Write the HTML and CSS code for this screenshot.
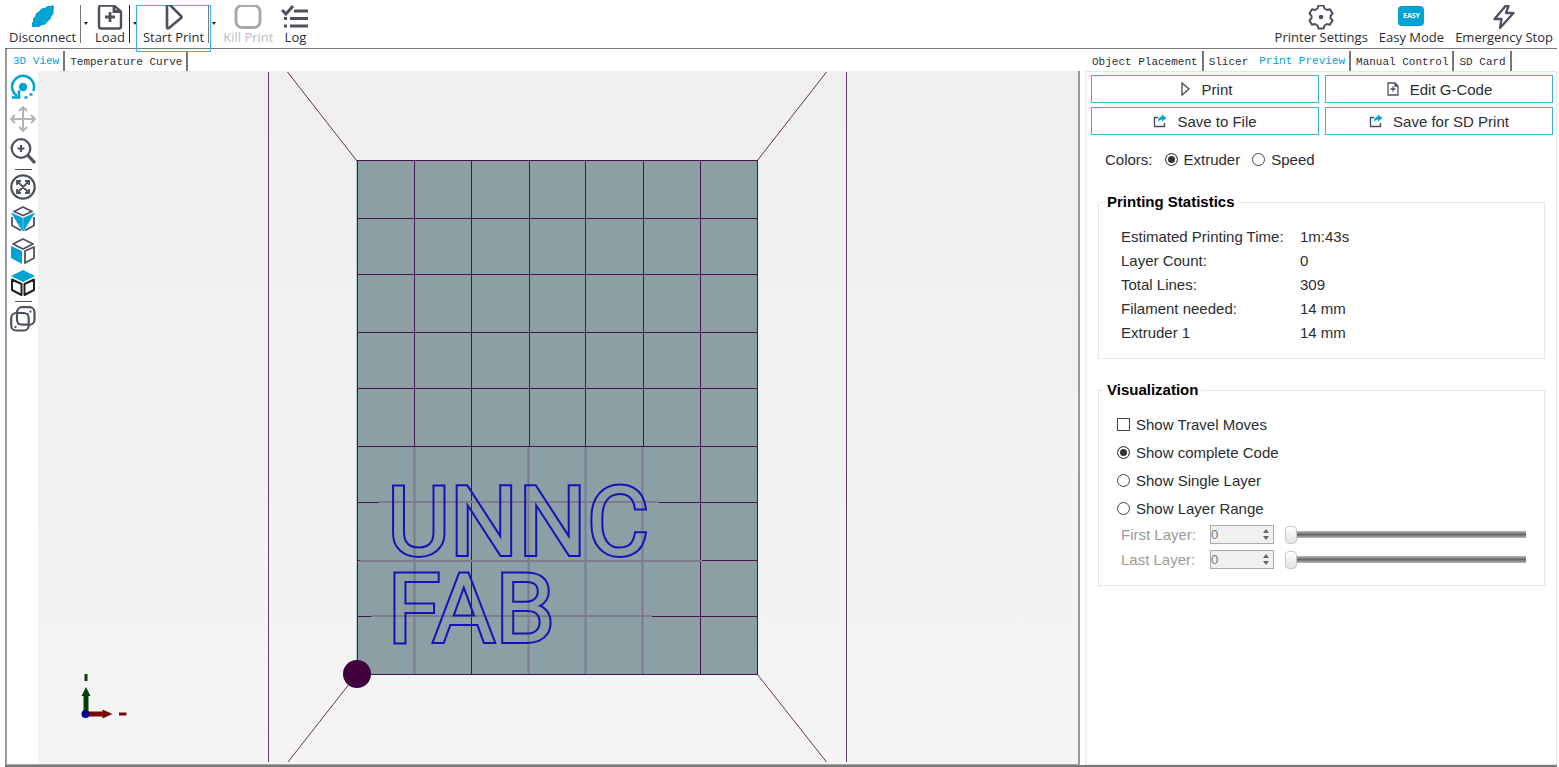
FILE: index.html
```html
<!DOCTYPE html>
<html lang="en">
<head>
    <meta charset="UTF-8">
    <meta name="viewport" content="width=device-width, initial-scale=1.0">
    <title>Print Preview</title>
    <link rel="stylesheet" href="styles.css">
</head>
<body>
    <!-- Main Toolbar -->
    <header class="toolbar">
        <div class="tool-group">
            <button class="tool-btn">
                <svg width="28" height="26" viewBox="0 0 28 26"><path d="M3.500 21.500l0-4 1-1 0-3 2-2 1-3 3-2 2-2.500 4-1 2-1.500 3.500 0 2-1 .5 3-.5 1.500 0 4-2 2-1 3-3 2.500-2 2.500-4 1-2 1.500-3.500 0-1.500.5z" fill="#00a3d1" stroke="#00a3d1" stroke-linejoin="round"/></svg>
                Disconnect
            </button>
            <button class="drop-btn" aria-label="Connection options"></button>
            <button class="tool-btn">
                <svg width="28" height="26" viewBox="0 0 28 26" fill="none" stroke="#4d505f" stroke-width="2.4"><path d="M18 0.500H5a2 2 0 0 0-2 2v19a2 2 0 0 0 2 2h18a2 2 0 0 0 2-2V6.500z"/><path d="M18 0v6.500h7M14 7v10M9 12h10" stroke-width="2.800"/></svg>
                Load
            </button>
            <button class="drop-btn dark" aria-label="Recent files"></button>
            <button class="tool-btn active">
                <svg width="28" height="26" viewBox="0 0 28 26" fill="none" stroke="#4d505f" stroke-width="2.6" stroke-linejoin="round"><path d="M7 1v21q0 2 2 1l12-10q1-1 0-2L10 0Q7-1 7 1z"/></svg>
                Start Print
            </button>
            <button class="drop-btn" aria-label="Print options"></button>
            <button class="tool-btn" disabled>
                <svg width="28" height="26" viewBox="0 0 28 26" fill="none" stroke="#a9a9a9" stroke-width="3"><rect x="2" y="0.500" width="24" height="22" rx="6"/></svg>
                Kill Print
            </button>
            <button class="tool-btn">
                <svg width="28" height="26" viewBox="0 0 28 26" fill="none" stroke="#4d505f" stroke-width="3"><path d="M1 5l4 4 7-8M13 6h14M9 13.500h18M9 21h18M3 13.500h3M3 21h3"/></svg>
                Log
            </button>
        </div>
        <div class="tool-group right">
            <button class="tool-btn">
                <svg width="28" height="26" viewBox="0 0 28 26" fill="none" stroke="#4d505f" stroke-width="2" stroke-linejoin="round"><path d="M11.500 0.500h5l1 3 2.500 1.500 3-.7 2.500 4.200-2 2.300v2.400l2 2.300-2.500 4.200-3-.7-2.500 1.500-1 3h-5l-1-3L8 19l-3 .7-2.500-4.200 2-2.300v-2.400l-2-2.300L5 4.300 8 5l2.500-1.500z"/><circle cx="14" cy="12" r="1.300" fill="#4d505f"/></svg>
                Printer Settings
            </button>
            <button class="tool-btn">
                <span class="easy-badge">EASY</span>
                Easy Mode
            </button>
            <button class="tool-btn">
                <svg width="28" height="26" viewBox="0 0 28 26" fill="none" stroke="#4d505f" stroke-width="2.300" stroke-linejoin="round"><path d="M15.500 1L4.500 14h7l-1.500 9 13.500-15h-7.500l2.500-7z"/></svg>
                Emergency Stop
            </button>
        </div>
    </header>

    <main class="workspace">
        <!-- 3D View -->
        <section class="view-panel">
            <div class="tabs" role="tablist">
                <button class="tab selected" role="tab" aria-selected="true">3D View</button>
                <button class="tab" role="tab">Temperature Curve</button>
            </div>
            <div class="view-body">
                <nav class="view-tools">
                    <div class="view-group">
                        <button aria-label="Rotate"><svg viewBox="0 0 26 26" fill="none" stroke="#00a3d1" stroke-width="2.600"><path d="M7 22A11 11 0 1 1 24 14q0 2-1 3"/><path d="M2 23.500h7v-7"/><circle cx="13" cy="13" r="4.200" fill="#00a3d1" stroke="none"/><path d="M19.500 20.500h3M14.500 23.500h3"/></svg></button>
                        <button aria-label="Move"><svg viewBox="0 0 26 26" fill="none" stroke="#b4b4b4" stroke-width="2"><path d="M13 1v24M1 13h24M9 5l4-4 4 4M9 21l4 4 4-4M5 9l-4 4 4 4M21 9l4 4-4 4"/></svg></button>
                        <button aria-label="Zoom"><svg viewBox="0 0 26 26" fill="none" stroke="#4d505f" stroke-width="2.200"><circle cx="11" cy="10.500" r="9.300"/><path d="M11 7v7M7.500 10.500h7"/><path d="M17.500 17l7.500 8" stroke-width="3.200"/></svg></button>
                    </div>
                    <hr>
                    <div class="view-group">
                        <button aria-label="Fit view"><svg viewBox="0 0 26 26" fill="none" stroke="#4d505f" stroke-width="1.800"><circle cx="13" cy="13" r="11.700" stroke-width="2.200"/><path d="M7 7l12 12M19 7L7 19M7 11V7h4M15 7h4v4M19 15v4h-4M11 19H7v-4"/></svg></button>
                        <button aria-label="Isometric view"><svg viewBox="0 0 26 26" fill="none" stroke="#4d505f" stroke-width="1.800" stroke-linejoin="round"><path d="M4 5.500l9-4.500 9 4.500-9 4zM2 11v8.500l9 5M24 11v8.500l-9 5"/><path d="M1.500 7l11 5v13zM24.500 7l-11 5v13z" fill="#00a3d1" stroke="#00a3d1" stroke-width=".6"/></svg></button>
                        <button aria-label="Front view"><svg viewBox="0 0 26 26" fill="none" stroke="#4d505f" stroke-width="1.800" stroke-linejoin="round"><path d="M3 6l10-5 10 5-10 5zM15 13l9-4v11l-9 5z"/><path d="M1 8l11 5v13L1 20z" fill="#00a3d1" stroke="none"/></svg></button>
                        <button aria-label="Top view"><svg viewBox="0 0 26 26" fill="none" stroke="#222" stroke-width="2" stroke-linejoin="round"><path d="M2 9.500l9.500 4.500v11L2 20zM24 9.500L14.500 14v11l9.500-5z"/><path d="M1 6l12-6 12 6-12 6z" fill="#00a3d1" stroke="none"/></svg></button>
                    </div>
                    <hr>
                    <div class="view-group">
                        <button aria-label="Parallel projection"><svg viewBox="0 0 26 26" fill="none" stroke="#4d505f" stroke-width="2.200"><rect x="7" y="1.200" width="17.500" height="17.500" rx="5"/><rect x="1.200" y="7" width="17.500" height="17.500" rx="5"/><path d="M19.500 5.500h2M16.500 8h2M4.500 21h2M7.500 18h2" stroke-width="2"/></svg></button>
                    </div>
                </nav>
                <svg class="scene" viewBox="38 71 1041 693" preserveAspectRatio="xMidYMid slice">
                    <defs>
                        <text id="label" class="print-text"><tspan x="388" y="555">UNNC</tspan><tspan x="388" y="642">FAB</tspan></text>
                        <mask id="outside" maskUnits="userSpaceOnUse" x="357" y="440" width="400" height="240">
                            <rect x="357" y="440" width="400" height="240" fill="white"/>
                            <use href="#label" fill="black"/>
                        </mask>
                    </defs>

                    <path d="M268.500 72v690M846.500 72v690" fill="none" stroke="#6b3a6b" shape-rendering="crispEdges"/>
                    <path d="M288 72l69.500 89M827 72l-69.500 89M357.500 674l-69 88M757.500 674l69.500 88" fill="none" stroke="#400040" stroke-width=".8"/>

                    <!-- Print bed -->
                    <rect x="357" y="161" width="401" height="513" fill="#8b9fa4"/>
                    <g fill="none" stroke="#48134c" shape-rendering="crispEdges">
                        <path d="M357.500 160.500h400v513.500h-400z"/>
                        <path d="M414.500 161v285M471.500 161v513M529.500 161v285M585.500 161v285M643.500 161v285M700.500 161v513"/>
                        <path d="M358 218.500h399M358 274.500h399M358 332.500h399M358 388.500h399M358 446.500h399M358 502.500h21M659 502.500h98M358 560.500h2M702 560.500h55M358 616.500h14M652 616.500h105"/>
                    </g>
                    <path d="M415 447v227M529 447v227M586 447v227M643 447v227M379 502h280M360 561h342M372 616h280" fill="none" stroke="#7d7b90" stroke-width="2"/>

                    <!-- Extruder path, only the outer half of the stroke is kept -->
                    <g mask="url(#outside)">
                        <use href="#label" fill="none" stroke="#1712b8" stroke-width="4"/>
                    </g>
                    <circle cx="357.500" cy="674" r="14" fill="#400040"/>

                    <!-- Axes -->
                    <path d="M86.500 714v-20" stroke="#0b3d0b" stroke-width="5"/>
                    <path d="M82 696l4.500-9 4.500 9zM85 674h3v7h-3z" fill="#0b3d0b"/>
                    <path d="M87 714h17" stroke="#7a0808" stroke-width="5"/>
                    <path d="M103 709.500l10 4.500-10 4.500zM119.500 712.500h7.500v3h-7.500z" fill="#7a0808"/>
                    <circle cx="86" cy="714" r="4" fill="#00008b"/>
                </svg>
            </div>
        </section>

        <!-- Print Preview -->
        <aside class="side-panel">
            <div class="tabs" role="tablist">
                <button class="tab" role="tab">Object Placement</button>
                <button class="tab last" role="tab">Slicer</button>
                <button class="tab selected" role="tab" aria-selected="true">Print Preview</button>
                <button class="tab" role="tab">Manual Control</button>
                <button class="tab" role="tab">SD Card</button>
            </div>
            <div class="side-body">
                <div class="actions">
                    <button class="action-btn">
                        <svg width="14" height="14" viewBox="0 0 14 14" fill="none" stroke="#4d505f" stroke-width="1.400"><path d="M4 1v12l7-6z"/></svg>
                        Print
                    </button>
                    <button class="action-btn">
                        <svg width="14" height="14" viewBox="0 0 14 14" fill="none" stroke="#4d505f" stroke-width="1.300"><path d="M9 1H2v12h10V4zM9 1v3h3M7 4.500v5M4.500 7h5"/></svg>
                        Edit G-Code
                    </button>
                    <button class="action-btn">
                        <svg width="14" height="14" viewBox="0 0 14 14" fill="none" stroke="#4d505f" stroke-width="1.400"><path d="M5 3.500H1.500v9h10V9"/><path d="M5 8q0-5.500 4-5.500V0.500l4.500 3.500L9 7.500V5.500Q6 5.500 5 8z" fill="#00a3d1" stroke="none"/></svg>
                        Save to File
                    </button>
                    <button class="action-btn">
                        <svg width="14" height="14" viewBox="0 0 14 14" fill="none" stroke="#4d505f" stroke-width="1.400"><path d="M5 3.500H1.500v9h10V9"/><path d="M5 8q0-5.500 4-5.500V0.500l4.500 3.500L9 7.500V5.500Q6 5.500 5 8z" fill="#00a3d1" stroke="none"/></svg>
                        Save for SD Print
                    </button>
                </div>

                <div class="colors">
                    <span>Colors:</span>
                    <label class="option"><input type="radio" name="colors" checked>Extruder</label>
                    <label class="option"><input type="radio" name="colors">Speed</label>
                </div>

                <fieldset class="box">
                    <legend>Printing Statistics</legend>
                    <dl class="stats">
                        <dt>Estimated Printing Time:</dt><dd>1m:43s</dd>
                        <dt>Layer Count:</dt><dd>0</dd>
                        <dt>Total Lines:</dt><dd>309</dd>
                        <dt>Filament needed:</dt><dd>14 mm</dd>
                        <dt>Extruder 1</dt><dd>14 mm</dd>
                    </dl>
                </fieldset>

                <fieldset class="box">
                    <legend>Visualization</legend>
                    <div class="options">
                        <label class="option"><input type="checkbox">Show Travel Moves</label>
                        <label class="option"><input type="radio" name="layers" checked>Show complete Code</label>
                        <label class="option"><input type="radio" name="layers">Show Single Layer</label>
                        <label class="option"><input type="radio" name="layers">Show Layer Range</label>
                    </div>
                    <div class="layer-row">
                        <label for="firstLayer">First Layer:</label>
                        <div class="spinner">
                            <input type="number" id="firstLayer" value="0" disabled>
                            <span class="arrows"></span>
                        </div>
                        <input type="range" aria-label="First layer" value="0" disabled>
                    </div>
                    <div class="layer-row">
                        <label for="lastLayer">Last Layer:</label>
                        <div class="spinner">
                            <input type="number" id="lastLayer" value="0" disabled>
                            <span class="arrows"></span>
                        </div>
                        <input type="range" aria-label="Last layer" value="0" disabled>
                    </div>
                </fieldset>
            </div>
        </aside>
    </main>
</body>
</html>
```

FILE: styles.css
```css
:root {
    --accent: #00a3d1;
    --text: #2b2d33;
    --line: #777;
    --light: #e6e6e6;
}

* {
    margin: 0;
    padding: 0;
    box-sizing: border-box;
}

body {
    min-height: 100vh;
    display: flex;
    flex-direction: column;
    padding: 0 2px 0 5px;
    background: white;
    color: var(--text);
    font-family: "Liberation Sans", Arial, sans-serif;
    font-size: 15px;
}

button {
    background: none;
    border: none;
    color: inherit;
    font: inherit;
}

/* Toolbar */
.toolbar {
    height: 49px;
    display: flex;
    justify-content: space-between;
    align-items: flex-start;
    border-bottom: 1px solid var(--line);
    padding-top: 5px;
}

.tool-group {
    display: flex;
}

.tool-group.right {
    gap: 3px;
}

.tool-btn {
    display: flex;
    flex-direction: column;
    align-items: center;
    padding: 0 4px;
    font-family: "Open Sans", sans-serif;
    font-size: 13px;
    line-height: 12px;
    white-space: nowrap;
}

.tool-btn:disabled {
    color: #b9bdcb;
}

.tool-btn.active {
    position: relative;
    height: 47px;
    margin: 0 -3px 0 -4px;
    padding: 0 7px;
    box-shadow: inset 0 0 0 1px #35b4e8;
}

.easy-badge {
    width: 26px;
    height: 20px;
    margin: 1px 0 5px;
    border-radius: 4px;
    background: var(--accent);
    color: white;
    font-size: 7px;
    font-weight: bold;
    line-height: 20px;
}

.drop-btn {
    width: 11px;
    height: 38px;
    border-left: 1px solid #777;
}

.drop-btn.dark {
    border-color: #222;
}

.drop-btn::after {
    content: "";
    display: block;
    width: 0;
    margin-left: 3px;
    border: 2px solid transparent;
    border-top: 3px solid #222;
}

/* Panels */
.workspace {
    flex: 1;
    display: flex;
    gap: 5px;
    border-bottom: 2px solid var(--line);
}

.view-panel {
    flex: 1;
    display: flex;
    flex-direction: column;
    border-left: 2px solid #999;
}

.side-panel {
    width: 472px;
    display: flex;
    flex-direction: column;
}

.tabs {
    display: flex;
    align-items: flex-start;
    height: 22px;
    padding: 2px 0 0 1px;
}

.side-panel .tabs {
    padding-left: 2px;
}

.tab {
    height: 20px;
    padding: 1px 4px 0 5px;
    border-right: 2px solid var(--line);
    font-family: "Liberation Mono", monospace;
    font-size: 11px;
    white-space: nowrap;
}

.tab.selected {
    padding-bottom: 2px;
    color: var(--accent);
}

.tab.last {
    border-right-color: transparent;
}

.view-body {
    flex: 1;
    display: flex;
    border-right: 2px solid #999;
    border-bottom: 1px solid #aaa;
}

.view-tools {
    width: 31px;
    padding: 3px 2px 0 3px;
}

.view-group {
    display: flex;
    flex-direction: column;
    gap: 6px;
}

.view-group button {
    width: 26px;
    height: 26px;
}

.view-group svg {
    display: block;
    width: 26px;
    height: 26px;
}

.view-tools hr {
    width: 17px;
    margin: 5px auto 4px;
    border: none;
    border-top: 1px solid #4d505f;
}

.scene {
    flex: 1;
    width: 0;
    min-width: 0;
    background: linear-gradient(#efefef, #f4f4f4);
}

.print-text {
    font-family: Roboto, sans-serif;
    font-size: 96px;
}

/* Print preview */
.side-body {
    flex: 1;
    padding: 3px 3px 0 4px;
    border: 1px solid var(--light);
    border-left: 2px solid #f0f0f0;
}

.actions {
    display: grid;
    grid-template-columns: 1fr 1fr;
    gap: 4px 6px;
}

.action-btn {
    display: flex;
    align-items: center;
    justify-content: center;
    gap: 10px;
    height: 28px;
    border: 1px solid #35b4d8;
}

.colors {
    display: flex;
    gap: 12px;
    align-items: center;
    height: 20px;
    margin: 14px 0 24px 14px;
}

.option {
    display: flex;
    align-items: center;
    gap: 6px;
}

.option input {
    appearance: none;
    width: 13px;
    height: 13px;
    border: 1px solid #444;
    background: white;
}

.option input[type="radio"] {
    border-radius: 50%;
}

.option input[type="radio"]:checked {
    background: #333;
    box-shadow: inset 0 0 0 2px white;
}

.box {
    margin: 0 8px 22px 7px;
    padding: 11px 18px 13px 22px;
    border: 1px solid var(--light);
}

.box legend {
    margin-left: -17px;
    padding: 0 3px;
    color: black;
    font-weight: bold;
    line-height: 18px;
}

.stats {
    display: grid;
    grid-template-columns: 179px 1fr;
    padding-top: 3px;
    line-height: 24px;
}

.options {
    display: flex;
    flex-direction: column;
    margin-left: -4px;
}

.options .option {
    height: 28px;
}

.layer-row {
    display: flex;
    align-items: center;
    height: 25px;
    color: #9b9b9b;
}

.layer-row label {
    width: 89px;
}

.spinner {
    display: flex;
    width: 64px;
    height: 19px;
    margin-right: 11px;
    border: 1px solid #aaa;
    background: #f0f0f0;
}

.spinner input {
    appearance: textfield;
    flex: 1;
    min-width: 0;
    border: none;
    background: none;
    color: #777;
    font-family: inherit;
    font-size: 13px;
}

.arrows {
    display: flex;
    flex-direction: column;
    align-items: center;
    justify-content: space-between;
    width: 14px;
    padding: 3px 0;
}

.arrows::before,
.arrows::after {
    content: "";
    border: 3px solid transparent;
    border-top-width: 0;
    border-bottom: 4px solid #666;
}

.arrows::after {
    border-bottom-width: 0;
    border-top: 4px solid #666;
}

.layer-row input[type="range"] {
    appearance: none;
    flex: 1;
    min-width: 0;
    height: 18px;
    background: linear-gradient(#bbb, #666, #bbb) center / 100% 7px no-repeat;
}

.layer-row input[type="range"]::-webkit-slider-thumb {
    appearance: none;
    width: 12px;
    height: 18px;
    border: 1px solid #c8c8c8;
    border-radius: 4px;
    background: linear-gradient(#fff, #e2e2e2);
}
```
